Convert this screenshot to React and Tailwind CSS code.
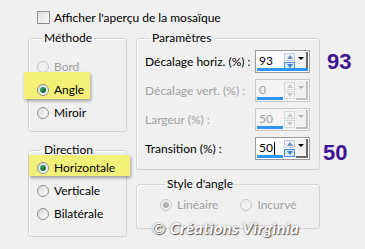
import React from 'react';

const Radio = ({ checked, disabled }) => (
  <span
    className={`relative inline-block w-[12px] h-[12px] rounded-full border shrink-0 ${
      disabled ? 'border-[#c8c8c8] bg-[#f0f0f0]' : 'border-[#8e8f8f] bg-gradient-to-br from-[#d8d8d8] to-[#ffffff]'
    }`}
  >
    {checked && (
      <span
        className={`absolute left-[2px] top-[2px] w-[6px] h-[6px] rounded-full ${
          disabled ? 'bg-[#b0b0b0]' : 'bg-gradient-to-br from-[#3ec07a] to-[#0a4f2a]'
        }`}
      />
    )}
  </span>
);

const RadioRow = ({ label, checked, disabled }) => (
  <div className="flex items-center gap-[5px] h-[16px]">
    <Radio checked={checked} disabled={disabled} />
    <span className={disabled ? 'text-[#a0a0a0]' : 'text-black'}>{label}</span>
  </div>
);

const Group = ({ title, className, children }) => (
  <fieldset className={`border border-[#d5d5d5] rounded-[3px] shadow-[inset_1px_1px_0_#fff] ${className}`}>
    <legend className="ml-[5px] px-[2px] leading-[14px] text-black">{title}</legend>
    {children}
  </fieldset>
);

const Spin = ({ value, bar, disabled, caret }) => (
  <div
    className={`relative w-[55px] h-[23px] border flex ${
      disabled ? 'border-[#c9c9c9] bg-[#f4f4f4]' : 'border-[#9a9a9a] bg-white'
    }`}
  >
    <div className={`flex-1 pl-[3px] pt-[2px] leading-[16px] ${disabled ? 'text-[#a0a0a0]' : 'text-black'}`}>
      {value}
      {caret && <span className="inline-block w-px h-[13px] bg-black align-middle ml-px" />}
    </div>
    <div className="flex flex-col w-[11px] mt-[2px] gap-px">
      <div className={`h-[8px] border flex items-center justify-center ${disabled ? 'border-[#d8d8d8]' : 'border-[#c0c8d8] bg-[#eef2f8]'}`}>
        <span className={`w-0 h-0 border-x-[3px] border-x-transparent border-b-[4px] ${disabled ? 'border-b-[#c8c8c8]' : 'border-b-[#6c8ab8]'}`} />
      </div>
      <div className={`h-[8px] border flex items-center justify-center ${disabled ? 'border-[#d8d8d8]' : 'border-[#3c8de0] bg-[#dbeafb]'}`}>
        <span className={`w-0 h-0 border-x-[3px] border-x-transparent border-t-[4px] ${disabled ? 'border-t-[#c8c8c8]' : 'border-t-[#3c7ed0]'}`} />
      </div>
    </div>
    <div
      className={`w-[12px] m-[1px] border-r-2 border-b-2 flex items-start justify-center pt-[5px] ${
        disabled ? 'bg-[#f0f0f0] border-[#c0c0c0]' : 'bg-[#f2f2f2] border-[#6a6a6a]'
      }`}
    >
      <span className={`w-0 h-0 border-x-[3px] border-x-transparent border-t-[3px] ${disabled ? 'border-t-[#b0b0b0]' : 'border-t-black'}`} />
    </div>
    <div className="absolute left-[1px] bottom-[1px] h-[3px] bg-[#2f95f0]" style={{ width: bar }} />
  </div>
);

const ParamRow = ({ label, disabled, children }) => (
  <div className="flex items-center justify-between h-[23px]">
    <span className={disabled ? 'text-[#a0a0a0]' : 'text-black'}>{label}</span>
    {children}
  </div>
);

export default function App() {
  return (
    <div className="w-[365px] h-[249px] bg-[#f0f0f0] font-['Lato',sans-serif] text-[12px] text-black overflow-hidden relative select-none">
      <div className="flex items-center gap-[4px] pl-[37px] pt-[11px] h-[24px]">
        <span className="w-[13px] h-[13px] border border-[#8e8f8f] bg-gradient-to-br from-[#dcdcdc] to-[#fbfbfb]" />
        <span>Afficher l'aperçu de la mosaïque</span>
      </div>

      <div className="flex gap-[9px] pl-[28px] mt-[7px]">
        <div className="flex flex-col w-[99px]">
          <Group title="Méthode" className="h-[101px] pl-[8px] pt-[14px]">
            <div className="flex flex-col gap-[7px]">
              <RadioRow label="Bord" disabled />
              <div className="relative">
                <div className="absolute left-[-13px] top-[-10px] w-[66px] h-[27px] bg-[#f3f078] shadow-[1px_2px_3px_rgba(0,0,0,0.35)]" />
                <div className="relative"><RadioRow label="Angle" checked /></div>
              </div>
              <RadioRow label="Miroir" />
            </div>
          </Group>
          <Group title="Direction" className="h-[94px] mt-[11px] pl-[8px] pt-[3px]">
            <div className="flex flex-col gap-[7px]">
              <div className="relative">
                <div className="absolute left-[-8px] top-[-5px] w-[101px] h-[21px] bg-[#f3f078] shadow-[1px_2px_3px_rgba(0,0,0,0.35)]" />
                <div className="relative"><RadioRow label="Horizontale" checked /></div>
              </div>
              <RadioRow label="Verticale" />
              <RadioRow label="Bilatérale" />
            </div>
          </Group>
        </div>

        <div className="flex flex-col w-[184px]">
          <Group title="Paramètres" className="h-[139px] pl-[8px] pr-[9px] pt-[5px]">
            <div className="flex flex-col gap-[6px]">
              <div className="relative">
                <ParamRow label="Décalage horiz. (%) :">
                  <Spin value="93" bar={51} />
                </ParamRow>
                <span className="absolute left-[182px] top-[-1px] text-[22px] font-bold font-['Liberation_Sans',sans-serif] text-[#3f1591] leading-[26px]">93</span>
              </div>
              <ParamRow label="Décalage vert. (%) :" disabled>
                <Spin value="0" bar={26} disabled />
              </ParamRow>
              <ParamRow label="Largeur (%) :" disabled>
                <Spin value="50" bar={26} disabled />
              </ParamRow>
              <div className="relative">
                <ParamRow label="Transition (%) :">
                  <Spin value="50" bar={26} caret />
                </ParamRow>
                <span className="absolute left-[178px] top-[3px] text-[22px] font-bold font-['Liberation_Sans',sans-serif] text-[#3f1591] leading-[26px]">50</span>
              </div>
            </div>
          </Group>
          <Group title="Style d'angle" className="h-[52px] mt-[7px] pl-[23px] pt-[6px]">
            <div className="flex gap-[22px]">
              <RadioRow label="Linéaire" checked disabled />
              <RadioRow label="Incurvé" disabled />
            </div>
          </Group>
        </div>
      </div>

      <div className="absolute left-[152px] top-[216px] text-[16px] italic font-bold text-white tracking-[0.5px] [text-shadow:1px_1px_1px_#555,0_0_2px_#777]">
        © Créations Virginia
      </div>
    </div>
  );
}
